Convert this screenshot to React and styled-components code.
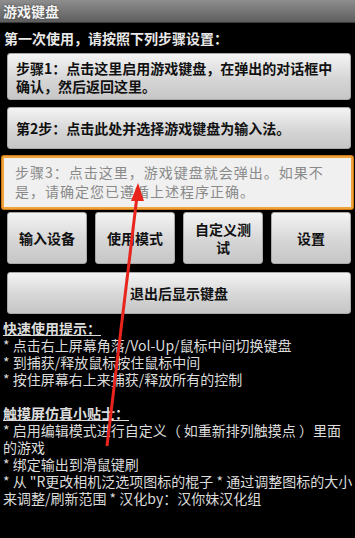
import React from 'react'
import styled, { createGlobalStyle } from 'styled-components'

const Global = createGlobalStyle`
  html, body { margin: 0; padding: 0; background: #000; }
  body { font-family: "Noto Sans CJK SC", "Liberation Sans", sans-serif; }
`

const quickTips = [
  '* 点击右上屏幕角落/Vol-Up/鼠标中间切换键盘',
  '* 到捕获/释放鼠标按住鼠标中间',
  '* 按住屏幕右上来捕获/释放所有的控制',
]

const touchTips = [
  '* 启用编辑模式进行自定义（ 如重新排列触摸点 ）里面的游戏',
  '* 绑定输出到滑鼠键刷',
  '* 从 "R更改相机泛选项图标的棍子 * 通过调整图标的大小来调整/刷新范围 * 汉化by：汉你妹汉化组',
]

export default function App() {
  return (
    <>
      <Global />
      <Screen>
        <TitleBar>游戏键盘</TitleBar>
        <Intro>第一次使用，请按照下列步骤设置：</Intro>
        <Stack>
          <StepButton $h={47}>步骤1：点击这里启用游戏键盘，在弹出的对话框中确认，然后返回这里。</StepButton>
          <StepButton $h={42}>第2步：点击此处并选择游戏键盘为输入法。</StepButton>
          <FocusBox>步骤3：点击这里，游戏键盘就会弹出。如果不是，请确定您已遵循上述程序正确。</FocusBox>
          <ButtonRow>
            <SmallButton>输入设备</SmallButton>
            <SmallButton>使用模式</SmallButton>
            <SmallButton>自定义测试</SmallButton>
            <SmallButton>设置</SmallButton>
          </ButtonRow>
          <WideButton>退出后显示键盘</WideButton>
        </Stack>
        <Tips>
          <TipTitle>快速使用提示：</TipTitle>
          {quickTips.map((t) => (
            <TipLine key={t}>{t}</TipLine>
          ))}
          <Spacer />
          <TipTitle>触摸屏仿真小贴士：</TipTitle>
          {touchTips.map((t) => (
            <TipLine key={t}>{t}</TipLine>
          ))}
        </Tips>
        <Arrow width="355" height="538" viewBox="0 0 355 538">
          <line x1="137" y1="196" x2="107" y2="446" stroke="#e8241c" strokeWidth="3" />
          <polygon points="138,183 131,201 144,201" fill="#e8241c" />
        </Arrow>
      </Screen>
    </>
  )
}

const Screen = styled.div`
  position: relative;
  width: 355px;
  height: 538px;
  background: #000;
  overflow: hidden;
`

const TitleBar = styled.div`
  height: 22px;
  padding-left: 3px;
  background: linear-gradient(#8e8e8e, #5e5e5e);
  border-bottom: 1px solid #3a3a3a;
  color: #f4f4f4;
  font-size: 14px;
  font-weight: bold;
  line-height: 22px;
  text-shadow: 0 0 2px #333;
`

const Intro = styled.div`
  padding: 5px 0 0 4px;
  height: 25px;
  color: #e8e8e8;
  font-size: 14px;
  font-weight: bold;
  line-height: 20px;
`

const Stack = styled.div`
  display: flex;
  flex-direction: column;
  gap: 7px;
  padding: 0 4px 0 7px;
`

const buttonSkin = `
  box-sizing: border-box;
  background: linear-gradient(#f4f4f4, #d6d6d6 55%, #c6c6c6);
  border: 1px solid #a8a8a8;
  border-radius: 3px;
  color: #111;
  font-size: 14px;
  font-weight: bold;
`

const StepButton = styled.div`
  ${buttonSkin}
  height: ${(p) => p.$h}px;
  padding: 0 10px 0 8px;
  display: flex;
  align-items: center;
  line-height: 18px;
`

const FocusBox = styled.div`
  box-sizing: border-box;
  margin: 0 -2px 0 -5px;
  height: 53px;
  padding: 5px 22px 0 11px;
  background: #f0f0f0;
  border: 2px solid #f0a23c;
  border-radius: 2px;
  box-shadow: 0 0 0 1px #c87818;
  color: #8a8a8a;
  font-size: 14px;
  line-height: 19px;
  letter-spacing: 1px;
`

const ButtonRow = styled.div`
  display: grid;
  grid-template-columns: repeat(4, 80px);
  column-gap: 8px;
  margin-top: -4px;
`

const SmallButton = styled.div`
  ${buttonSkin}
  height: 52px;
  padding: 0 8px;
  display: flex;
  align-items: center;
  justify-content: center;
  text-align: center;
  line-height: 18px;
`

const WideButton = styled.div`
  ${buttonSkin}
  height: 42px;
  margin-top: 1px;
  display: flex;
  align-items: center;
  justify-content: center;
`

const Tips = styled.div`
  padding: 6px 2px 0 3px;
  color: #dcdcdc;
  font-size: 14px;
  line-height: 17px;
`

const TipTitle = styled.div`
  display: block;
  width: fit-content;
  font-weight: bold;
  text-decoration: underline;
`

const TipLine = styled.div``

const Spacer = styled.div`
  height: 17px;
`

const Arrow = styled.svg`
  position: absolute;
  left: 0;
  top: 0;
  pointer-events: none;
`
